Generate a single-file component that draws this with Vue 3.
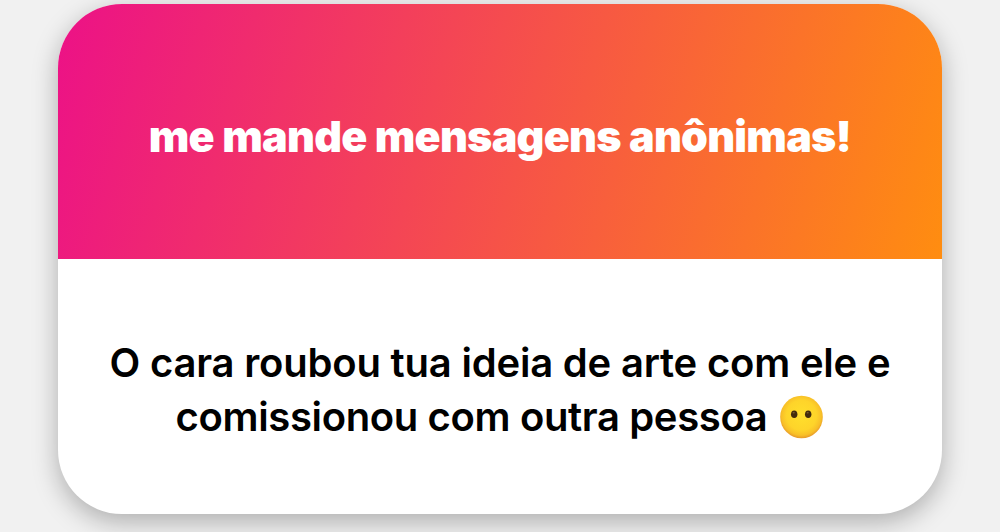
<template>
  <main class="screen">
    <article class="card">
      <header class="card-head">
        <h1 class="prompt">me mande mensagens anônimas!</h1>
      </header>
      <p class="message">
        <span class="line first">O cara roubou tua ideia de arte com ele e</span>
        <span class="line second">
          <span>comissionou com outra pessoa</span>
          <svg class="emoji" viewBox="0 0 44 44" role="img" aria-label="rosto sem boca">
            <defs>
              <radialGradient id="face" cx="50%" cy="46%" r="54%">
                <stop offset="0" stop-color="#ffdf2c" />
                <stop offset=".65" stop-color="#fed42a" />
                <stop offset=".87" stop-color="#f8bf28" />
                <stop offset="1" stop-color="#e6982a" />
              </radialGradient>
            </defs>
            <circle cx="21.5" cy="22" r="21.3" fill="url(#face)" />
            <ellipse cx="14.2" cy="19.2" rx="3.2" ry="3.8" fill="#422b0d" />
            <ellipse cx="28.2" cy="19.2" rx="3.2" ry="3.8" fill="#422b0d" />
            <ellipse cx="13.7" cy="17.8" rx="1.1" ry=".8" fill="#7b5c2c" />
            <ellipse cx="27.7" cy="17.8" rx="1.1" ry=".8" fill="#7b5c2c" />
          </svg>
        </span>
      </p>
    </article>
  </main>
</template>

<script setup>
</script>

<style>
body { background: #f1f1f1; }
</style>

<style scoped>
.screen {
  box-sizing: border-box;
  height: 532px;
  padding: 4px 58px 0;
  overflow: hidden;
  background: #f1f1f1;
  font-family: Inter, "Liberation Sans", sans-serif;
}
.card {
  height: 510px;
  border-radius: 64px;
  overflow: hidden;
  background: #fff;
  box-shadow: 0 8px 26px rgba(0, 0, 0, .28);
}
.card-head {
  display: flex;
  align-items: center;
  justify-content: center;
  height: 255px;
  padding-top: 9px;
  box-sizing: border-box;
  background: linear-gradient(105deg, #ec1187 0%, #ff8d10 100%);
}
.prompt {
  margin: 0;
  color: #fff;
  font-size: 43px;
  line-height: 54px;
  font-weight: 900;
  letter-spacing: -.75px;
  word-spacing: .5px;
  white-space: nowrap;
}
.message {
  display: flex;
  flex-direction: column;
  align-items: center;
  margin: 0;
  padding-top: 77px;
  color: #000;
  font-size: 40px;
  font-weight: 600;
  line-height: 54px;
  white-space: nowrap;
}
.line { display: flex; align-items: center; height: 54px; }
.first { letter-spacing: -.2px; }
.second { gap: 13px; letter-spacing: -.36px; }
.emoji { width: 44px; height: 44px; }
</style>
